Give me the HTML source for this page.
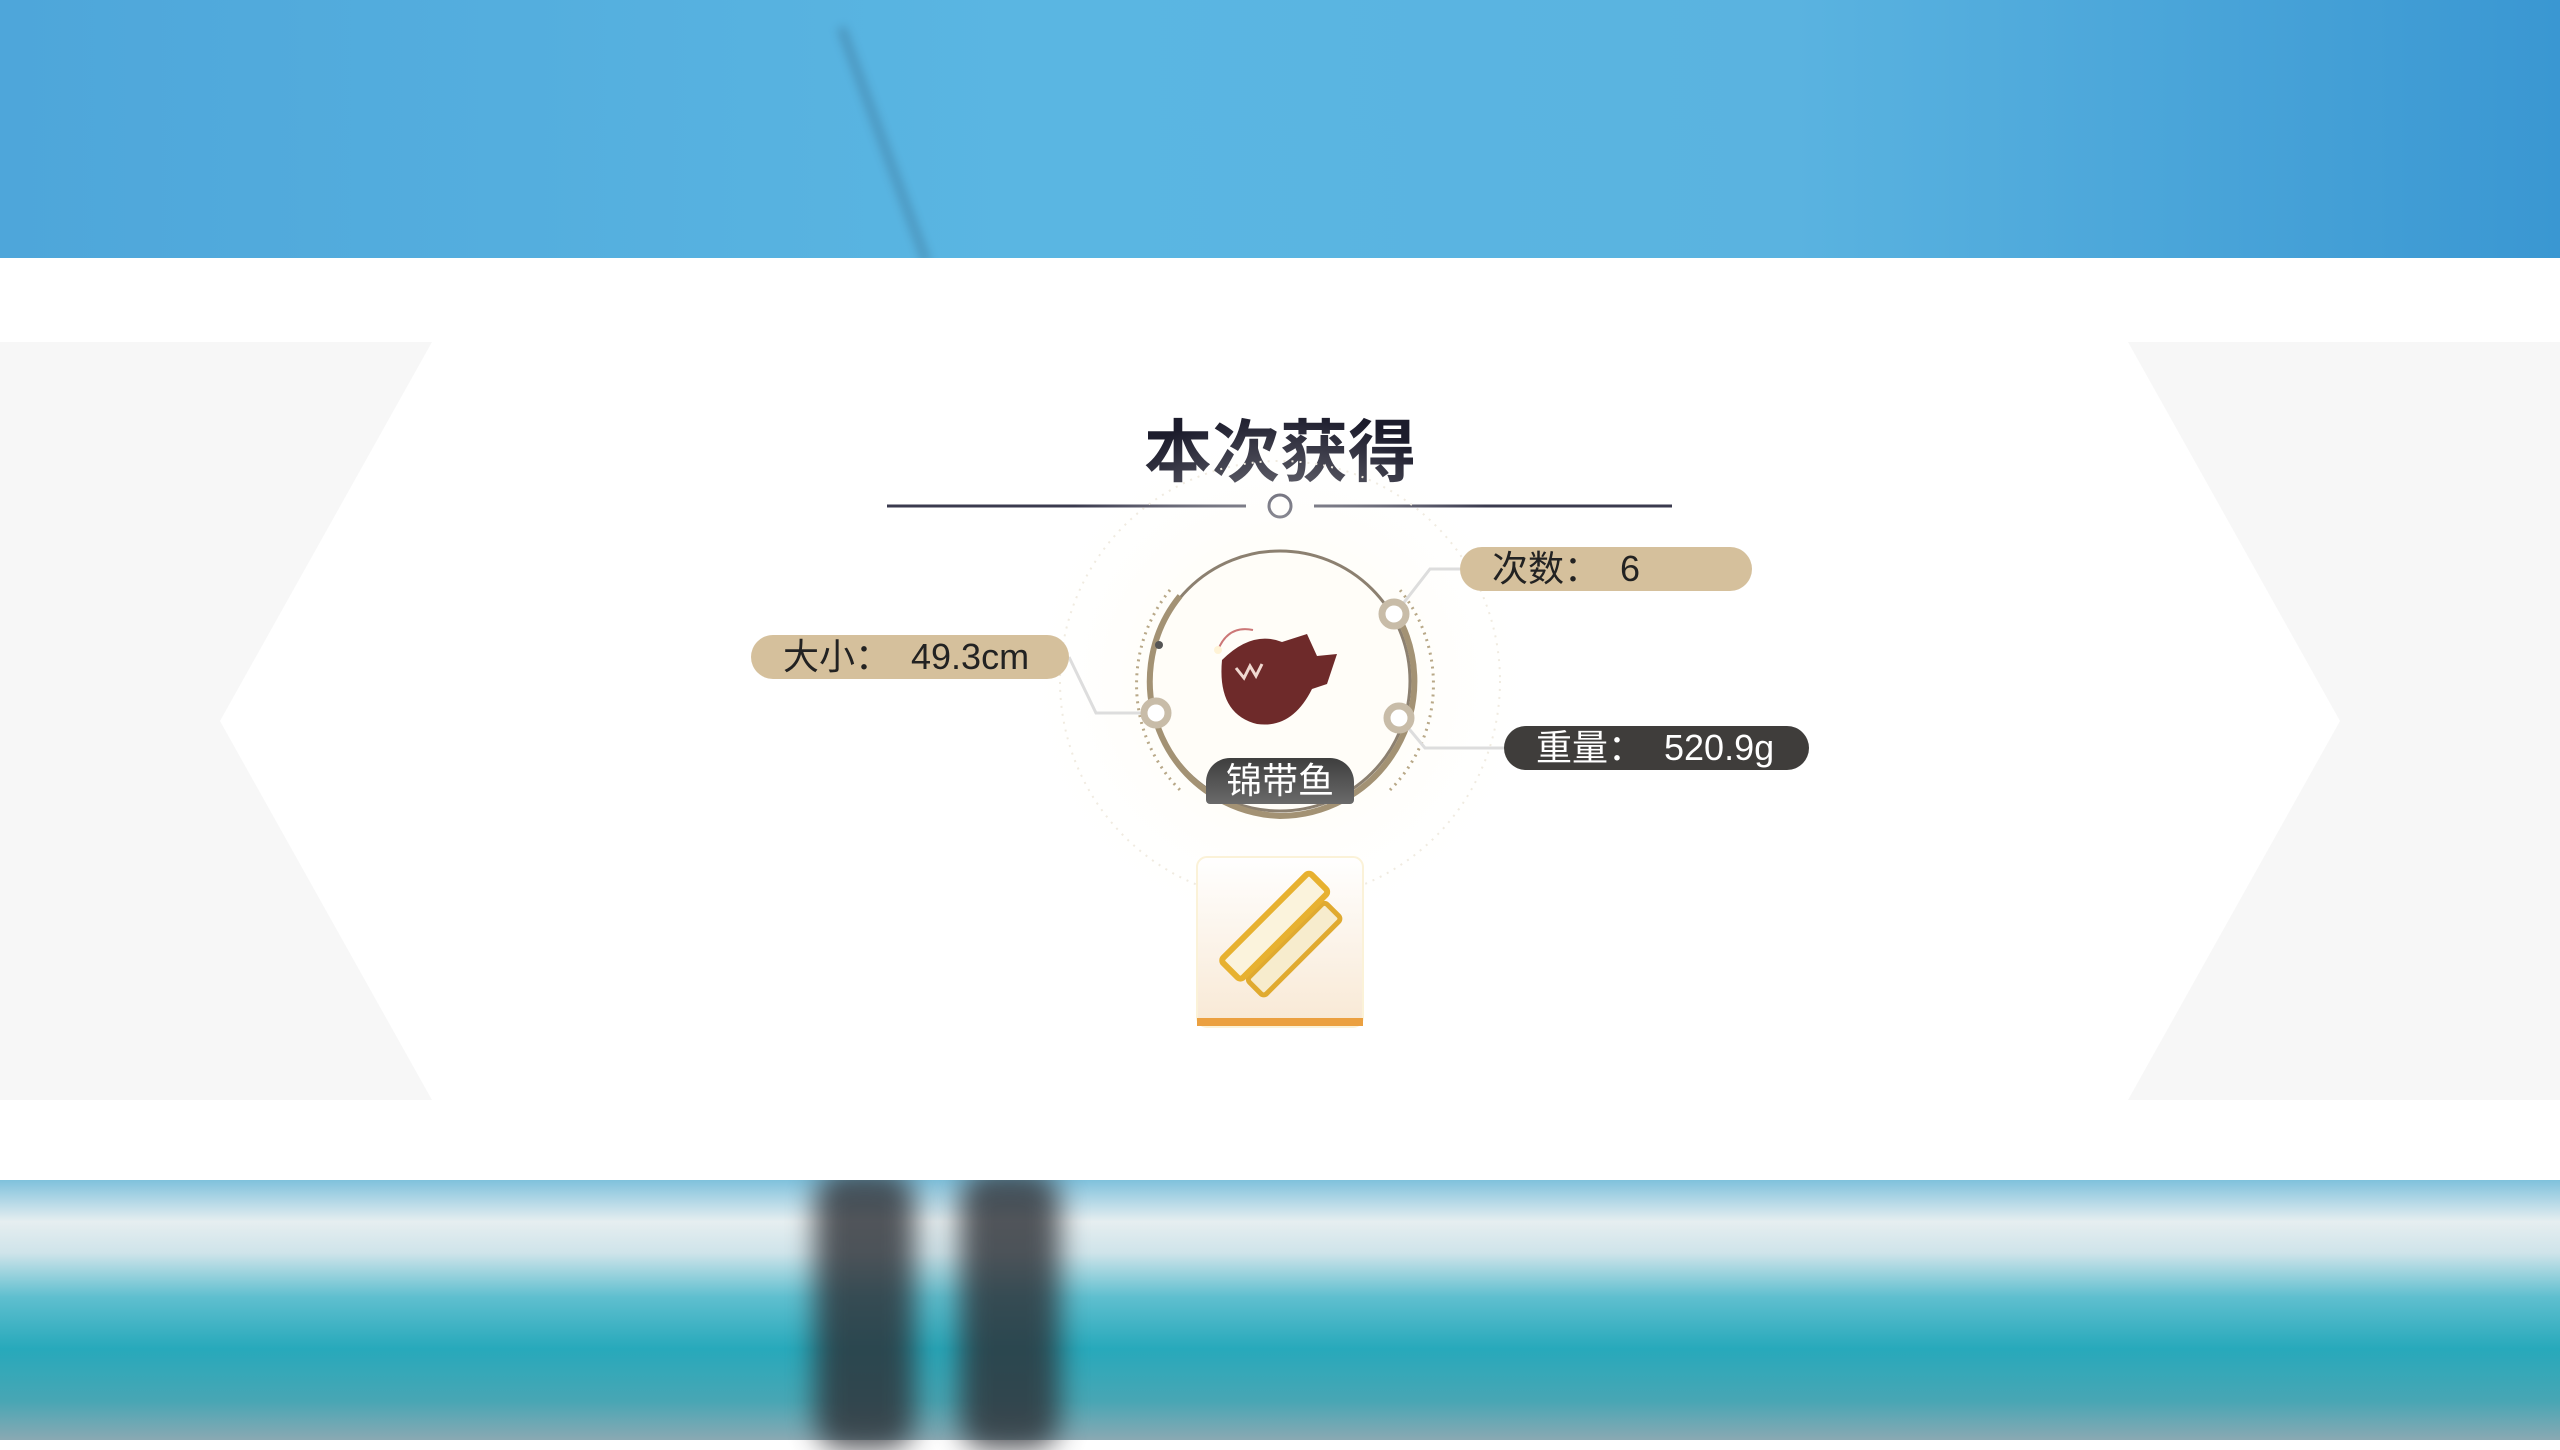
<!DOCTYPE html>
<html><head><meta charset="utf-8"><style>
*{margin:0;padding:0;box-sizing:border-box}
body{width:2560px;height:1440px;overflow:hidden;position:relative;background:#fff;font-family:"Liberation Sans","Noto Sans CJK SC",sans-serif}
.sky{position:absolute;left:0;top:0;width:2560px;height:258px;background:linear-gradient(90deg,#4ea6da 0%,#5ab6e2 40%,#5ab3e0 70%,#3a97d2 100%)}
.sea{position:absolute;left:0;top:1180px;width:2560px;height:260px;background:linear-gradient(180deg,#7fc1dc 0%,#e6eef0 16%,#cfe4ea 28%,#5fbfcf 45%,#27a9bb 65%,#48a6b4 85%,#8aa9b3 100%)}
.panel{position:absolute;left:0;top:258px;width:2560px;height:922px;background:#fff}
.band{position:absolute;left:0;top:342px;width:2560px;height:758px;background:#f7f7f7}
.mid{position:absolute;left:220px;top:342px;width:2120px;height:758px;background:#fff;clip-path:polygon(0 50%,10% 0,90% 0,100% 50%,90% 100%,10% 100%)}
.title{position:absolute;left:0;width:2560px;top:397px;text-align:center;font-size:68px;font-weight:bold;color:#1c1c2c}
.pill{position:absolute;height:44px;border-radius:22px;font-size:36px;line-height:44px;color:#222;padding-left:32px}
</style></head><body>
<div class="sky"></div>
<div style="position:absolute;left:880px;top:20px;width:8px;height:250px;background:#3a6a8a;transform:rotate(-20deg);opacity:.45;filter:blur(5px)"></div>
<div class="sea"></div>
<div style="position:absolute;left:815px;top:1170px;width:100px;height:280px;background:#2c2f35;filter:blur(14px);opacity:.8;border-radius:30px"></div>
<div style="position:absolute;left:960px;top:1170px;width:100px;height:280px;background:#2c2f35;filter:blur(14px);opacity:.8;border-radius:30px"></div>
<div class="panel"></div>
<div class="band"></div>
<div class="mid"></div>
<div class="title">本次获得</div>
<svg width="2560" height="1440" style="position:absolute;left:0;top:0">
<defs><radialGradient id="g"><stop offset="0" stop-color="#fffbea"/><stop offset="1" stop-color="#fff" stop-opacity="0"/></radialGradient>
<linearGradient id="b" x1="0" y1="0" x2="0" y2="1"><stop offset="0" stop-color="#fff"/><stop offset="1" stop-color="#f8e8d4"/></linearGradient></defs>
<line x1="887" y1="506" x2="1246" y2="506" stroke="#3a3a4e" stroke-width="3"/>
<line x1="1314" y1="506" x2="1672" y2="506" stroke="#3a3a4e" stroke-width="3"/>
<circle cx="1280" cy="506" r="11" fill="#fff" stroke="#3a3a4e" stroke-width="3"/>
<circle cx="1280" cy="681" r="270" fill="url(#g)"/>
<circle cx="1280" cy="681" r="220" fill="none" stroke="#f0ebe0" stroke-width="2" stroke-dasharray="2 6"/>
<path d="M1170 590 A150 150 0 0 0 1180 790" fill="none" stroke="#b8a888" stroke-width="3" stroke-dasharray="2 5"/>
<path d="M1390 790 A150 150 0 0 0 1400 590" fill="none" stroke="#b8a888" stroke-width="3" stroke-dasharray="2 5"/>
<circle cx="1280" cy="681" r="130" fill="#fffdf8" stroke="#8c8070" stroke-width="3"/>
<path d="M1180 596 A135 135 0 0 0 1280 816 A135 135 0 0 0 1396 613" fill="none" stroke="#a39274" stroke-width="6"/>
<circle cx="1159" cy="645" r="4" fill="#555"/>
<polyline points="1069,657 1096,713 1155,713" fill="none" stroke="#ddd" stroke-width="3"/>
<polyline points="1460,569 1430,569 1395,614" fill="none" stroke="#ddd" stroke-width="3"/>
<polyline points="1400,718 1425,748 1504,748" fill="none" stroke="#ddd" stroke-width="3"/>
<g fill="#fff" stroke="#c8bca8" stroke-width="7"><circle cx="1156" cy="713" r="12"/><circle cx="1394" cy="614" r="12"/><circle cx="1399" cy="718" r="12"/></g>
<path d="M1222 660 q30-30 60-18 l25 -8 l10 22 l20 -2 l-10 30 l-15 5 q-20 40-55 35 q-40-10-35-64z" fill="#6e2a2a"/>
<path d="M1236 668 l8 10 l6-12 l6 10 l6-12" fill="none" stroke="#f0d8d0" stroke-width="3"/>
<path d="M1218 650 q10-25 35-20" fill="none" stroke="#c77" stroke-width="2"/><circle cx="1218" cy="650" r="4" fill="#fff3d6"/>
<rect x="1197" y="857" width="166" height="170" rx="10" fill="url(#b)" stroke="#fbf2d8" stroke-width="2"/>
<rect x="1197" y="1018" width="166" height="8" fill="#eba040"/>
<g transform="rotate(45 1280 935)"><rect x="1288" y="880" width="24" height="110" rx="4" fill="#f7eccd" stroke="#e0aa30" stroke-width="5"/><rect x="1256" y="870" width="28" height="125" rx="4" fill="#fbf3dc" stroke="#e7b130" stroke-width="6"/></g>
</svg>
<div style="position:absolute;left:1206px;top:758px;width:148px;height:46px;border-radius:24px 24px 4px 4px;background:linear-gradient(#3e3e3e,#6a6a6a);color:#fff;font-size:36px;text-align:center;line-height:46px">锦带鱼</div>
<div class="pill" style="left:1460px;top:547px;width:292px;background:#d5c09c">次数：&nbsp; 6</div>
<div class="pill" style="left:751px;top:635px;width:318px;background:#d5c09c">大小：&nbsp; 49.3cm</div>
<div class="pill" style="left:1504px;top:726px;width:305px;background:#3f3d3b;color:#fff">重量：&nbsp; 520.9g</div>
</body></html>
